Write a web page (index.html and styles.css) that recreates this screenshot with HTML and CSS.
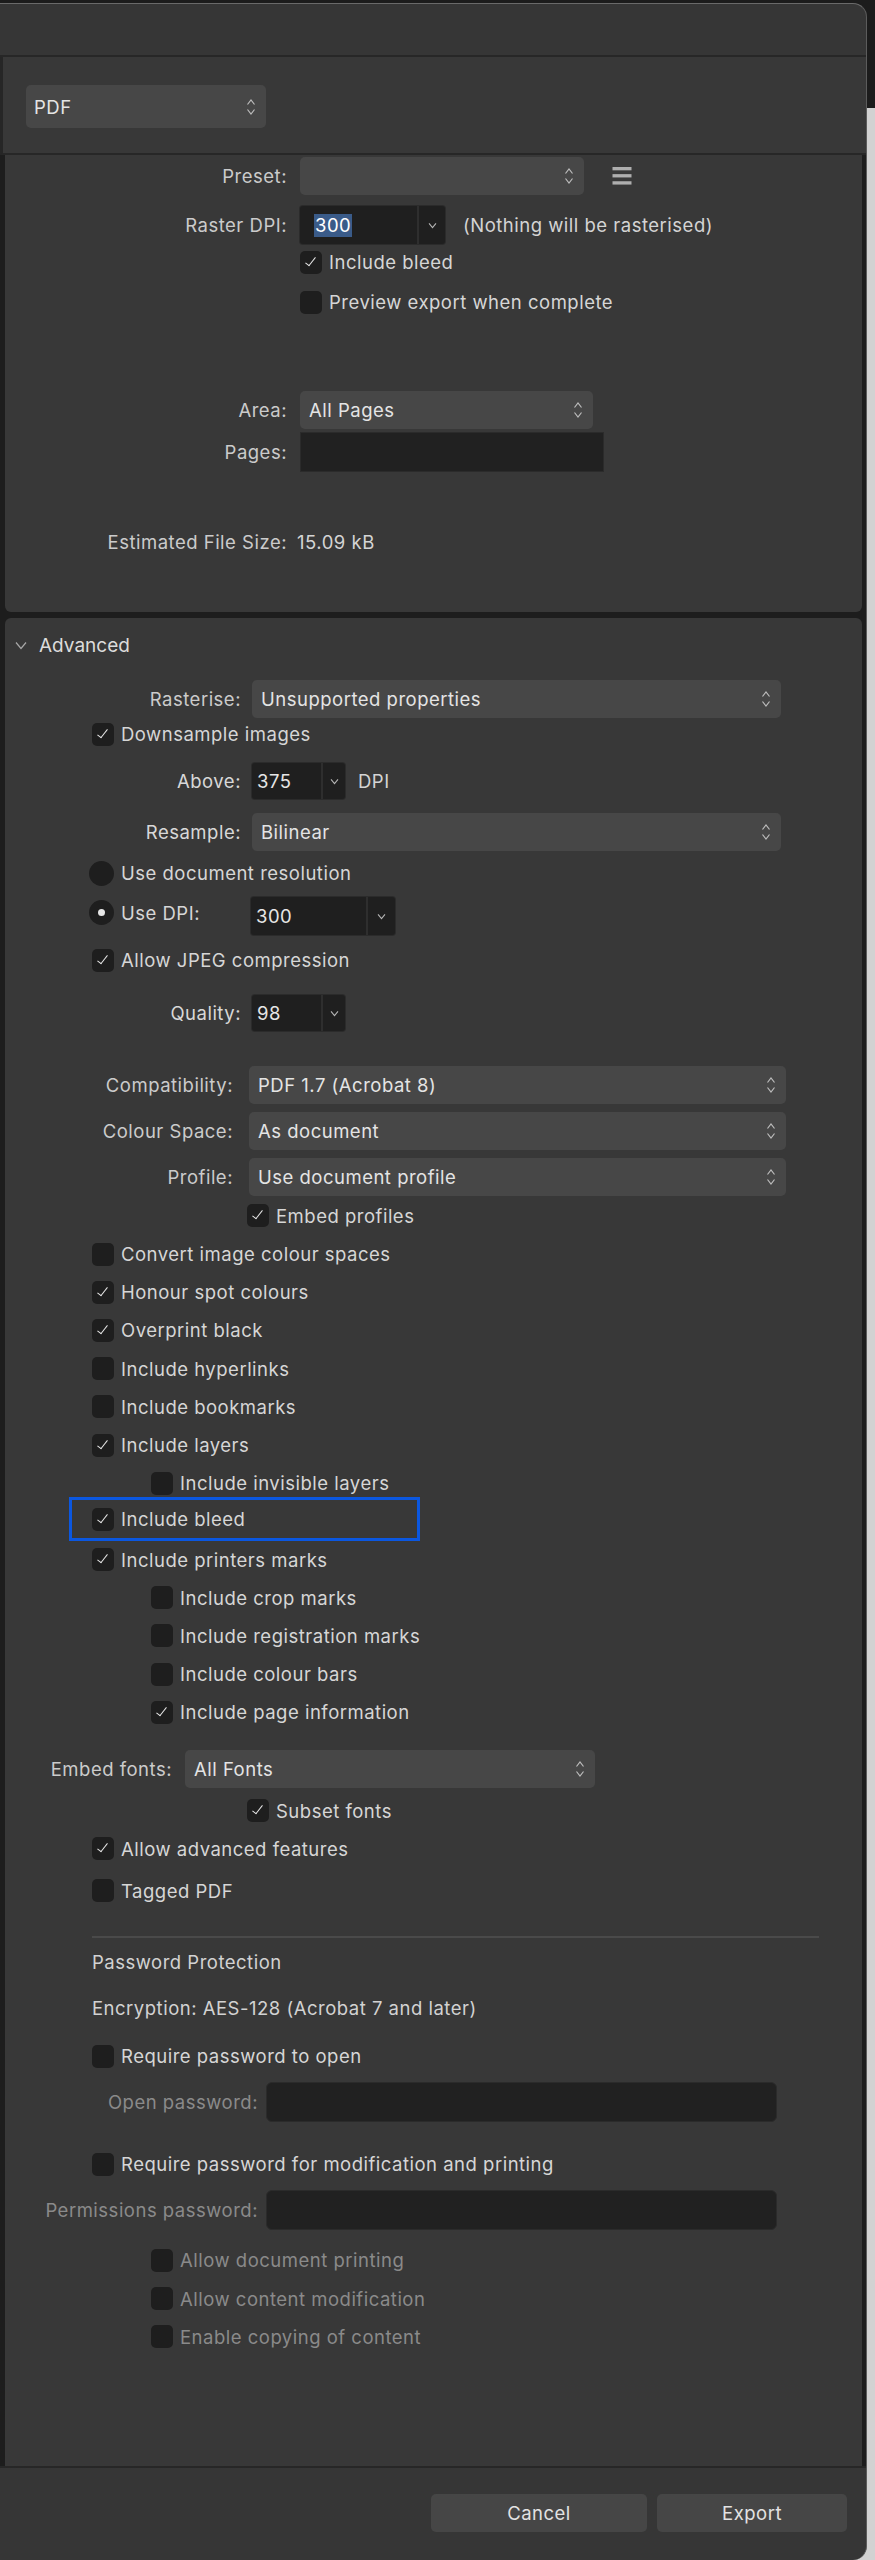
FILE: index.html
```html
<!DOCTYPE html>
<html lang="en">
  <head>
    <meta charset="utf-8">
    <title>Export PDF</title>
    <link rel="stylesheet" href="styles.css">
  </head>
  <body>
    <svg class="defs" aria-hidden="true">
      <symbol id="updown" viewBox="0 0 10 18">
        <path d="M1.5 6.5 L5 2 L8.5 6.5 M1.5 11.5 L5 16 L8.5 11.5" fill="none" stroke="#bdbdbd" stroke-width="1.2"/>
      </symbol>
      <symbol id="drop" viewBox="0 0 10 8">
        <path d="M1 1.5 L5 6.5 L9 1.5" fill="none" stroke="#b5b5b5" stroke-width="1.2"/>
      </symbol>
    </svg>

    <div class="window">
      <div class="titlebar"></div>

      <div class="format-bar">
        <div class="select select-format">
          <span>PDF</span>
          <svg class="updown"><use href="#updown"/></svg>
        </div>
      </div>

      <div class="scroll">
        <!-- general -->
        <section class="panel panel-general">
          <div class="row h38">
            <span class="lbl lbl-general">Preset:</span>
            <div class="select w-preset">
              <span></span>
              <svg class="updown"><use href="#updown"/></svg>
            </div>
            <svg class="menu-icon" viewBox="0 0 20 20">
              <rect x="0" y="0" width="20" height="3.5" fill="#aeaeae"/>
              <rect x="0" y="7.5" width="20" height="3.5" fill="#aeaeae"/>
              <rect x="0" y="15" width="20" height="3.5" fill="#aeaeae"/>
            </svg>
          </div>
          <div class="row h38 mt11">
            <span class="lbl lbl-general">Raster DPI:</span>
            <div class="combo w-raster">
              <span class="combo-value pad14"><span class="selected">300</span></span>
              <span class="combo-btn"><svg><use href="#drop"/></svg></span>
            </div>
            <span class="note">(Nothing will be rasterised)</span>
          </div>
          <div class="check h36 ind-general"><span class="box on"></span>Include bleed</div>
          <div class="check h36 mt4 ind-general"><span class="box"></span>Preview export when complete</div>

          <div class="row h38 mt71">
            <span class="lbl lbl-general">Area:</span>
            <div class="select w-area">
              <span>All Pages</span>
              <svg class="updown"><use href="#updown"/></svg>
            </div>
          </div>
          <div class="row h40 mt3">
            <span class="lbl lbl-general">Pages:</span>
            <div class="field w-pages"></div>
          </div>
          <div class="row h30 mt55">
            <span class="lbl lbl-general gap10">Estimated File Size:</span>
            <span class="value">15.09 kB</span>
          </div>
        </section>

        <!-- advanced -->
        <section class="panel panel-advanced">
          <div class="adv-head">
            <svg class="adv-chev" viewBox="0 0 12 9"><path d="M1 1.5 L6 7.5 L11 1.5" fill="none" stroke="#a8a8a8" stroke-width="1.2"/></svg>
            <span>Advanced</span>
          </div>

          <div class="row h38 mt8">
            <span class="lbl lbl-adv">Rasterise:</span>
            <div class="select w-wide">
              <span>Unsupported properties</span>
              <svg class="updown"><use href="#updown"/></svg>
            </div>
          </div>
          <div class="check h32 ind-1"><span class="box on"></span>Downsample images</div>
          <div class="row h36 mt13">
            <span class="lbl lbl-adv strong">Above:</span>
            <div class="combo w-small">
              <span class="combo-value">375</span>
              <span class="combo-btn"><svg><use href="#drop"/></svg></span>
            </div>
            <span class="unit">DPI</span>
          </div>
          <div class="row h38 mt14">
            <span class="lbl lbl-adv strong">Resample:</span>
            <div class="select w-wide">
              <span>Bilinear</span>
              <svg class="updown"><use href="#updown"/></svg>
            </div>
          </div>
          <div class="row h44 ind-radio">
            <span class="radio"></span>
            <span class="radio-text">Use document resolution</span>
          </div>
          <div class="row h38 mt2 ind-radio">
            <div class="radio-item">
              <span class="radio on"></span>
              <span class="radio-text w-radio-text">Use DPI:</span>
            </div>
            <div class="combo w-usedpi">
              <span class="combo-value">300</span>
              <span class="combo-btn"><svg><use href="#drop"/></svg></span>
            </div>
          </div>
          <div class="check h38 mt6 ind-1"><span class="box on"></span>Allow JPEG compression</div>
          <div class="row h36 mt16">
            <span class="lbl lbl-adv strong">Quality:</span>
            <div class="combo w-small">
              <span class="combo-value">98</span>
              <span class="combo-btn"><svg><use href="#drop"/></svg></span>
            </div>
          </div>

          <div class="row h38 mt35">
            <span class="lbl lbl-compat">Compatibility:</span>
            <div class="select w-compat">
              <span>PDF 1.7 (Acrobat 8)</span>
              <svg class="updown"><use href="#updown"/></svg>
            </div>
          </div>
          <div class="row h38 mt8">
            <span class="lbl lbl-compat">Colour Space:</span>
            <div class="select w-compat">
              <span>As document</span>
              <svg class="updown"><use href="#updown"/></svg>
            </div>
          </div>
          <div class="row h38 mt8">
            <span class="lbl lbl-compat">Profile:</span>
            <div class="select w-compat">
              <span>Use document profile</span>
              <svg class="updown"><use href="#updown"/></svg>
            </div>
          </div>
          <div class="check h39 ind-3"><span class="box on"></span>Embed profiles</div>

          <div class="check ind-1"><span class="box"></span>Convert image colour spaces</div>
          <div class="check ind-1"><span class="box on"></span>Honour spot colours</div>
          <div class="check ind-1"><span class="box on"></span>Overprint black</div>
          <div class="check ind-1"><span class="box"></span>Include hyperlinks</div>
          <div class="check ind-1"><span class="box"></span>Include bookmarks</div>
          <div class="check ind-1"><span class="box on"></span>Include layers</div>
          <div class="check ind-2"><span class="box"></span>Include invisible layers</div>
          <div class="highlight">
            <div class="check"><span class="box on"></span>Include bleed</div>
          </div>
          <div class="check ind-1"><span class="box on"></span>Include printers marks</div>
          <div class="check ind-2"><span class="box"></span>Include crop marks</div>
          <div class="check ind-2"><span class="box"></span>Include registration marks</div>
          <div class="check ind-2"><span class="box"></span>Include colour bars</div>
          <div class="check ind-2"><span class="box on"></span>Include page information</div>

          <div class="row h38 mt19">
            <span class="lbl lbl-fonts">Embed fonts:</span>
            <div class="select w-fonts">
              <span>All Fonts</span>
              <svg class="updown"><use href="#updown"/></svg>
            </div>
          </div>
          <div class="check mt3 ind-3"><span class="box on"></span>Subset fonts</div>
          <div class="check ind-1"><span class="box on"></span>Allow advanced features</div>
          <div class="check mt4 ind-1"><span class="box"></span>Tagged PDF</div>

          <hr class="separator">
          <div class="text-row mt8">Password Protection</div>
          <div class="text-row mt14">Encryption: AES-128 (Acrobat 7 and later)</div>

          <div class="check mt13 ind-1"><span class="box"></span>Require password to open</div>
          <div class="row h40 mt7">
            <span class="lbl lbl-pw dim">Open password:</span>
            <div class="field w-pw"></div>
          </div>
          <div class="check mt23 ind-1"><span class="box"></span>Require password for modification and printing</div>
          <div class="row h40 mt7">
            <span class="lbl lbl-pw dim">Permissions password:</span>
            <div class="field w-pw"></div>
          </div>
          <div class="check mt11 ind-2 dim"><span class="box"></span>Allow document printing</div>
          <div class="check ind-2 dim"><span class="box"></span>Allow content modification</div>
          <div class="check ind-2 dim"><span class="box"></span>Enable copying of content</div>
        </section>
      </div>

      <div class="footer">
        <button class="btn btn-cancel">Cancel</button>
        <button class="btn btn-export">Export</button>
      </div>
    </div>
  </body>
</html>
```

FILE: styles.css
```css
*, *::after, *::before {
  box-sizing: border-box;
  padding: 0;
  margin: 0;
}

html, body {
  width: 875px;
  height: 2560px;
}

body {
  background: linear-gradient(to bottom, #1c1c1c 108px, #d2d2d2 108px);
  font-family: Inter, Roboto, "Liberation Sans", sans-serif;
  font-size: 18.5px;
  letter-spacing: 0.5px;
  color: #d6d6d6;
  overflow: hidden;
}

.defs {
  display: none;
}

/* window frame */
.window {
  display: flex;
  flex-direction: column;

  width: 867px;
  height: 2557px;
  margin-top: 3px;
  overflow: hidden;

  background-color: #363636;
  border-top: 1px solid #6a6a6a;
  border-right: 1px solid #5c5c5c;
  border-radius: 0 14px 14px 0;
}

.titlebar {
  flex: 0 0 53px;
  border-bottom: 2px solid #272727;
}

.format-bar {
  flex: 0 0 98px;
  padding: 28px 0 0 23px;

  background-color: #383838;
  border-left: 3px solid #262626;
  border-bottom: 2px solid #272727;
}

.scroll {
  flex: 1;
  display: flex;
  flex-direction: column;
  gap: 6px;

  padding: 0 4px 0 5px;
  background-color: #1d1d1d;
}

.panel {
  display: flex;
  flex-direction: column;
  background-color: #383838;
}

.panel-general {
  flex: 0 0 457px;
  padding-top: 2px;
  border-radius: 0 0 6px 6px;
}

.panel-advanced {
  flex: 1;
  border-radius: 6px 6px 0 0;
}

.footer {
  flex: 0 0 94px;
  display: flex;
  justify-content: flex-end;
  align-items: flex-start;
  gap: 10px;

  padding: 26px 19px 0 0;
  border-top: 2px solid #272727;
}

.btn {
  height: 38px;
  border: none;
  border-radius: 5px;
  background-color: #464646;
  color: #e2e2e2;
  font: inherit;
  letter-spacing: inherit;
}

.btn-cancel {
  width: 216px;
}

.btn-export {
  width: 190px;
}

/* rows */
.row {
  display: flex;
  align-items: center;
  flex: none;
}

.h30 { height: 30px; }
.h32 { height: 32px; }
.h36 { height: 36px; }
.h38 { height: 38px; }
.h39 { height: 39px; }
.h40 { height: 40px; }
.h44 { height: 44px; }

.mt2 { margin-top: 2px; }
.mt3 { margin-top: 3px; }
.mt4 { margin-top: 4px; }
.mt6 { margin-top: 6px; }
.mt7 { margin-top: 7px; }
.mt8 { margin-top: 8px; }
.mt11 { margin-top: 11px; }
.mt13 { margin-top: 13px; }
.mt14 { margin-top: 14px; }
.mt16 { margin-top: 16px; }
.mt19 { margin-top: 19px; }
.mt23 { margin-top: 23px; }
.mt35 { margin-top: 35px; }
.mt55 { margin-top: 55px; }
.mt71 { margin-top: 71px; }

.lbl {
  flex: none;
  text-align: right;
  color: #cbcbcb;
  white-space: nowrap;
}

.lbl.strong {
  color: #d8d8d8;
}

.lbl-general { width: 282px; margin-right: 13px; }
.lbl-general.gap10 { margin-right: 10px; }
.lbl-adv { width: 236px; margin-right: 11px; }
.lbl-compat { width: 228px; margin-right: 16px; }
.lbl-fonts { width: 167px; margin-right: 13px; }
.lbl-pw { width: 253px; margin-right: 8px; }

.dim {
  color: #8a8a8a;
}

.value,
.note,
.unit {
  color: #d4d4d4;
}

.note {
  margin-left: 18px;
}

.unit {
  margin-left: 13px;
}

/* pop-up buttons */
.select {
  display: flex;
  align-items: center;
  justify-content: space-between;
  flex: none;

  height: 38px;
  padding: 0 10px 0 9px;
  border-radius: 5px;
  background-color: #474747;
  color: #e4e4e4;
}

.select-format {
  width: 240px;
  height: 43px;
  padding-left: 8px;
}

.updown {
  width: 10px;
  height: 18px;
  flex: none;
}

.w-preset { width: 284px; }
.w-area { width: 293px; }
.w-wide { width: 529px; }
.w-compat { width: 537px; }
.w-fonts { width: 410px; }

.menu-icon {
  width: 20px;
  height: 19px;
  margin-left: 28px;
}

/* combo boxes */
.combo {
  display: flex;
  flex: none;
  height: 100%;
  border-radius: 3px;
  background-color: #1f1f1f;
  box-shadow: 0 0 0 1px #2b2b2b;
}

.combo-value {
  flex: 1;
  display: flex;
  align-items: center;
  padding-left: 5px;
  color: #e6e6e6;
}

.combo-value.pad14 {
  padding-left: 14px;
}

.selected {
  padding: 0 1px;
  line-height: 23px;
  background-color: #3a5b89;
  color: #ffffff;
}

.combo-btn {
  display: flex;
  align-items: center;
  justify-content: center;
  border-left: 2px solid #2e2e2e;
}

.combo-btn svg {
  width: 9px;
  height: 7px;
}

.w-raster { width: 145px; }
.w-raster .combo-btn { width: 28px; }
.w-small { width: 93px; }
.w-small .combo-btn { width: 24px; }
.w-usedpi { width: 144px; }
.w-usedpi .combo-btn { width: 29px; }

/* text fields */
.field {
  height: 100%;
  flex: none;
  background-color: #212121;
  border: 1px solid #2b2b2b;
}

.w-pages { width: 304px; }

.w-pw {
  width: 511px;
  border-radius: 6px;
}

/* checkboxes */
.check {
  display: flex;
  align-items: center;
  gap: 7px;
  flex: none;
  height: 38.2px;
  color: #d6d6d6;
  white-space: nowrap;
}

.check.h32 { height: 32px; }
.check.h36 { height: 36px; }
.check.h38 { height: 38px; }
.check.h39 { height: 39px; }
.check.dim { color: #8a8a8a; }

.ind-general { padding-left: 295px; }
.ind-1 { padding-left: 87px; }
.ind-2 { padding-left: 146px; }
.ind-3 { padding-left: 242px; }
.ind-radio { padding-left: 84px; }

.box {
  position: relative;
  flex: none;
  width: 22px;
  height: 23px;
  border-radius: 5px;
  background-color: #1e1e1e;
}

.box.on::after {
  content: '';
  position: absolute;
  left: 8px;
  top: 4px;
  width: 5px;
  height: 11px;
  border-right: 1.6px solid #e8e8e8;
  border-bottom: 1.6px solid #e8e8e8;
  transform: rotate(38deg);
}

.highlight {
  flex: none;
  width: 351px;
  height: 44px;
  margin: -5px 0 -0.8px 64px;
  padding-left: 20px;
  border: 3px solid #0b57e0;
}

.highlight .check {
  height: 100%;
}

/* radio buttons */
.radio {
  display: grid;
  place-items: center;
  flex: none;
  width: 25px;
  height: 25px;
  border-radius: 50%;
  background-color: #1e1e1e;
}

.radio.on::after {
  content: '';
  width: 7px;
  height: 7px;
  border-radius: 50%;
  background-color: #e6e6e6;
}

.radio-text {
  margin-left: 7px;
  color: #d6d6d6;
}

.radio-item {
  display: flex;
  align-items: center;
  align-self: flex-start;
  margin-top: 3px;
}

.w-radio-text {
  width: 130px;
}

/* advanced header */
.adv-head {
  display: flex;
  align-items: center;
  flex: none;
  height: 54px;
  padding-left: 10px;
  font-size: 19px;
  letter-spacing: normal;
  color: #dcdcdc;
}

.adv-chev {
  width: 12px;
  height: 9px;
  margin-right: 12px;
}

.separator {
  flex: none;
  width: 727px;
  height: 2px;
  margin: 26px 0 0 87px;
  border: none;
  background-color: #4a4a4a;
}

.text-row {
  display: flex;
  align-items: center;
  flex: none;
  height: 32px;
  padding-left: 87px;
  color: #d2d2d2;
}
```
